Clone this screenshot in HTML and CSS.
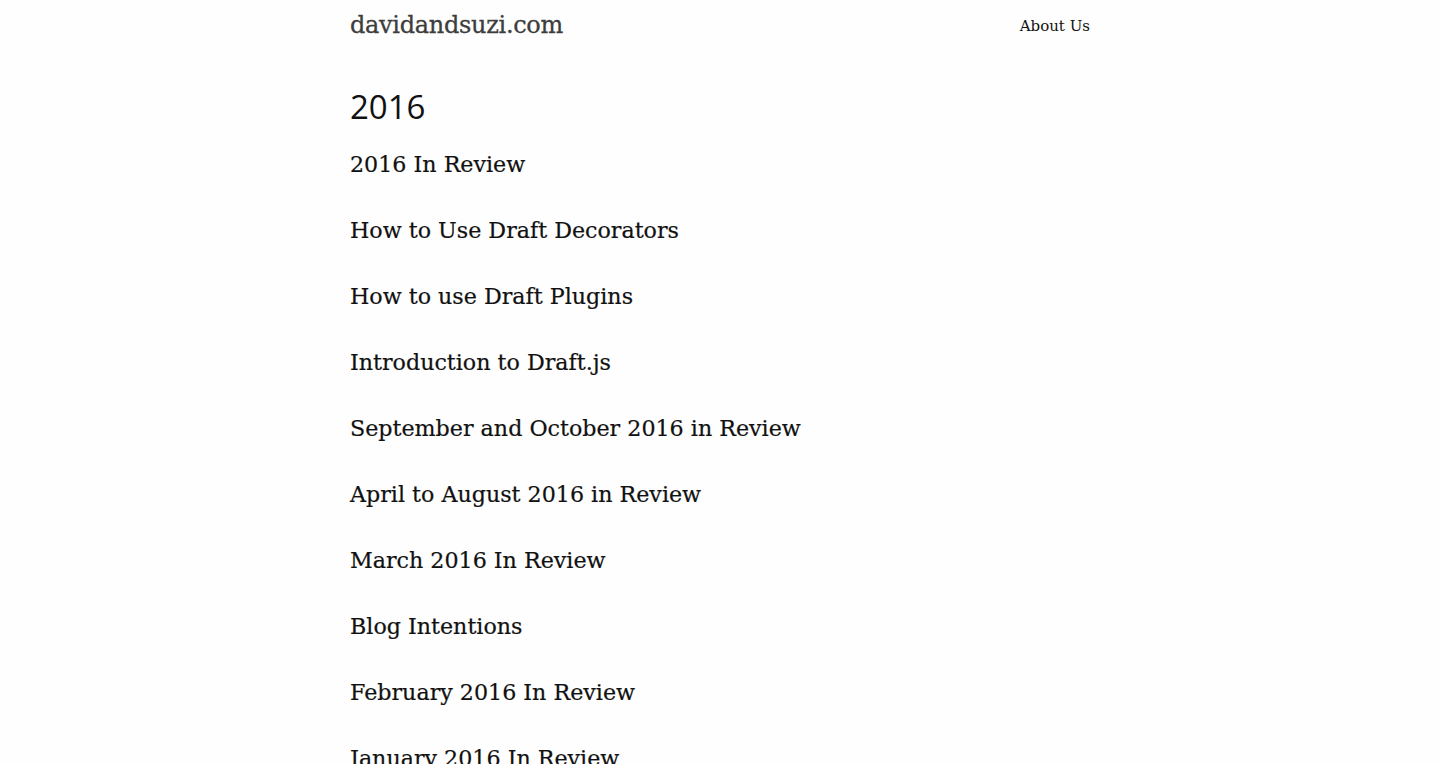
FILE: index.html
```html
<!DOCTYPE html>
<html>
<head>
<meta charset="utf-8">
<link rel="stylesheet" href="styles.css">
</head>
<body>
<div class="wrap">
  <header class="header">
    <a class="brand" href="#">davidandsuzi.com</a>
    <nav class="nav"><a href="#">About Us</a></nav>
  </header>
  <main>
    <h2 class="year">2016</h2>
    <ul class="posts">
      <li><a href="#">2016 In Review</a></li>
      <li><a href="#">How to Use Draft Decorators</a></li>
      <li><a href="#">How to use Draft Plugins</a></li>
      <li><a href="#">Introduction to Draft.js</a></li>
      <li><a href="#">September and October 2016 in Review</a></li>
      <li><a href="#">April to August 2016 in Review</a></li>
      <li><a href="#">March 2016 In Review</a></li>
      <li><a href="#">Blog Intentions</a></li>
      <li><a href="#">February 2016 In Review</a></li>
      <li><a href="#">January 2016 In Review</a></li>
    </ul>
  </main>
</div>
</body>
</html>
```
FILE: styles.css
```css
html, body { margin: 0; padding: 0; background: #fefefe; }
body { font-family: "DejaVu Serif", serif; color: #111; }
a { color: inherit; text-decoration: none; }
.wrap { width: 740px; margin: 0 auto; }
.header { display: flex; justify-content: space-between; align-items: flex-start; height: 56px; }
.brand { margin-top: 11px; font-size: 24px; color: #3d3d3d; letter-spacing: -0.3px; -webkit-text-stroke: 0.3px #3d3d3d; }
.nav { margin-top: 17px; font-size: 15px; color: #111; }
.year { font-family: "Open Sans", sans-serif; font-weight: 500; font-size: 33px; margin: 28px 0 0; line-height: 46px; }
.posts { list-style: none; margin: 0; padding: 1px 0 0; }
.posts li { font-size: 22.2px; line-height: 66px; height: 66px; -webkit-text-stroke: 0.2px #111; }
```
